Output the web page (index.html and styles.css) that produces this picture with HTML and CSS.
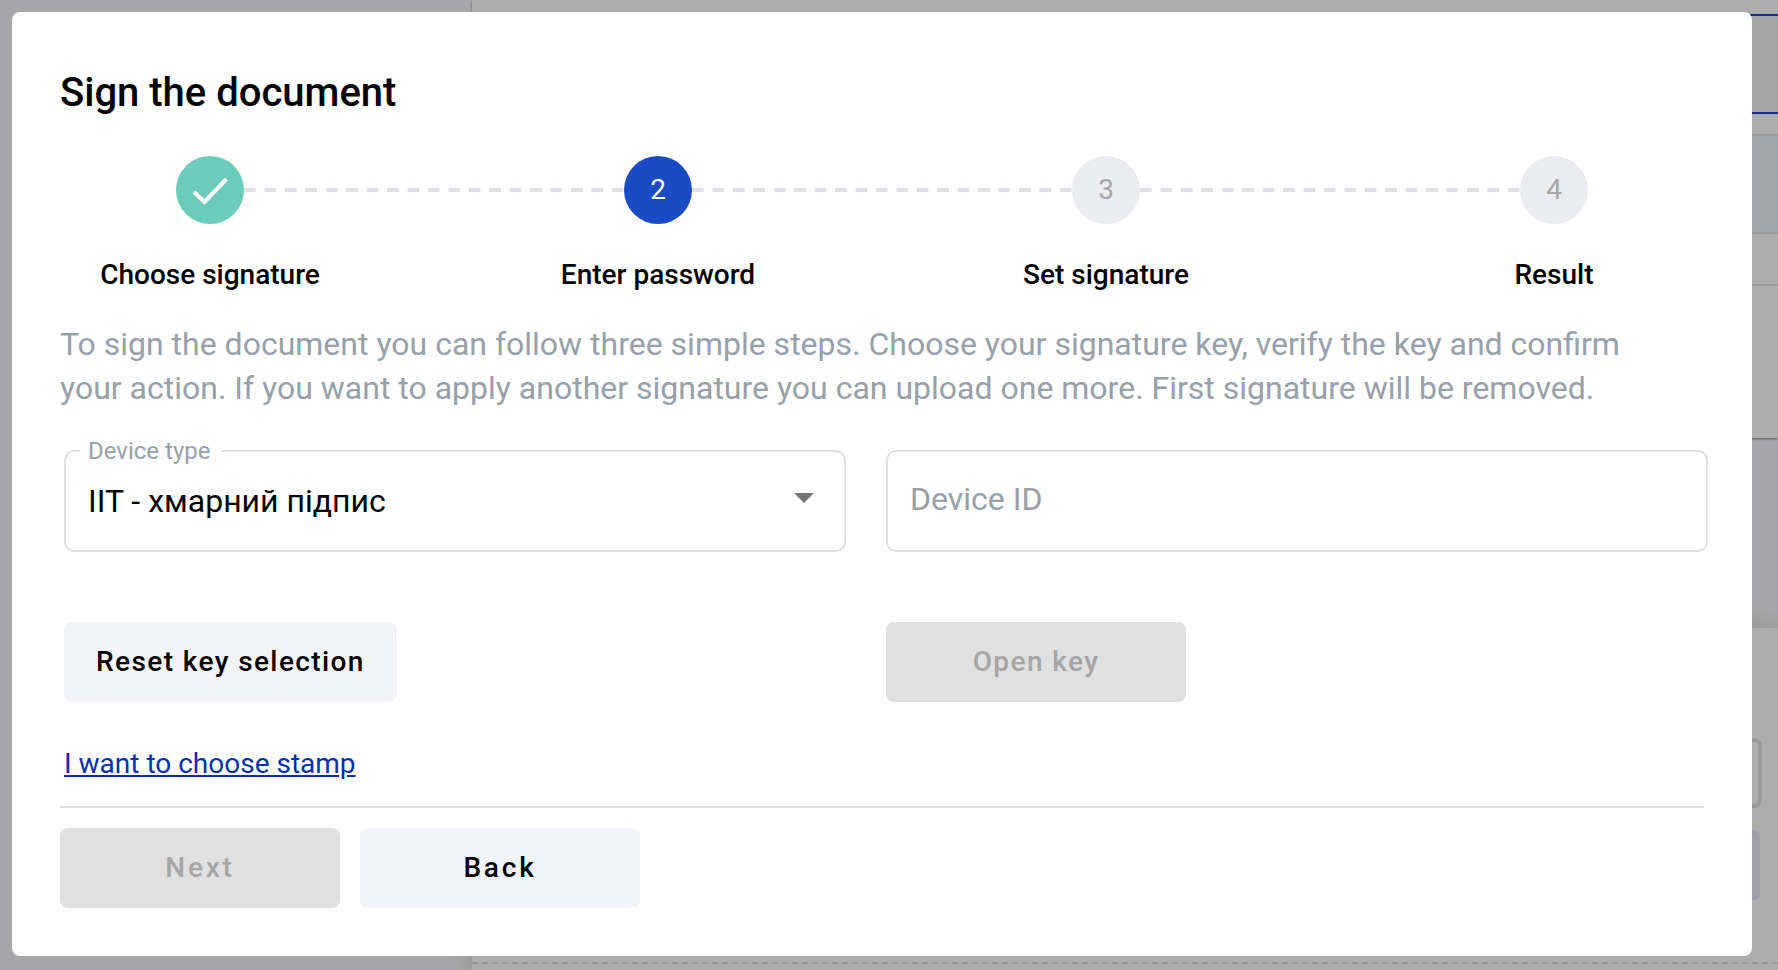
FILE: index.html
```html
<!DOCTYPE html>
<html lang="en">
<head>
<meta charset="utf-8">
<meta name="viewport" content="width=device-width, initial-scale=1">
<title>Sign the document</title>
<link rel="stylesheet" href="styles.css">
</head>
<body>
<div class="page" aria-hidden="true">
  <div class="page-side"></div>
  <div class="page-main">
    <div class="sheet">
      <div class="sheet-active"></div>
      <div class="sheet-head"></div>
      <div class="sheet-row"></div>
    </div>
    <div class="panel">
      <div class="panel-field"></div>
      <div class="panel-action"></div>
      <div class="panel-drop"></div>
    </div>
  </div>
</div>

<div class="overlay">
  <section class="modal" role="dialog" aria-modal="true" aria-labelledby="modal-title">
    <h1 class="title" id="modal-title">Sign the document</h1>

    <ol class="stepper">
      <li class="step">
        <span class="dot dot-done">
          <svg class="check" viewBox="0 0 36 28" aria-label="Done"><path d="M2 16 12.500 26 34.500 3" fill="none" stroke="currentColor" stroke-width="4"/></svg>
        </span>
        <span class="line"></span>
        <span class="step-label">Choose signature</span>
      </li>
      <li class="step" aria-current="step">
        <span class="dot dot-current">2</span>
        <span class="line"></span>
        <span class="step-label">Enter password</span>
      </li>
      <li class="step">
        <span class="dot">3</span>
        <span class="line"></span>
        <span class="step-label">Set signature</span>
      </li>
      <li class="step step-last">
        <span class="dot">4</span>
        <span class="step-label">Result</span>
      </li>
    </ol>

    <p class="intro">To sign the document you can follow three simple steps. Choose your signature key, verify the key and confirm your action. If you want to apply another signature you can upload one more. First signature will be removed.</p>

    <form class="key-form">
      <div class="fields">
        <div class="field field-select">
          <label class="field-label" for="device-type">Device type</label>
          <select class="control" id="device-type">
            <option>IIT - хмарний підпис</option>
          </select>
          <svg class="arrow" viewBox="0 0 20 10" aria-hidden="true"><path d="M0 0h20L10 10z" fill="currentColor"/></svg>
        </div>
        <div class="field">
          <input class="control control-text" id="device-id" type="text" placeholder="Device ID" aria-label="Device ID">
        </div>
      </div>
      <div class="key-actions">
        <button class="button" type="button">Reset key selection</button>
        <button class="button button-open" type="button" disabled>Open key</button>
      </div>
      <a class="stamp-link" href="#stamp">I want to choose stamp</a>
    </form>

    <div class="footer">
      <button class="button button-nav" type="button" disabled>Next</button>
      <button class="button button-nav" type="button">Back</button>
    </div>
  </section>
</div>
</body>
</html>
```
FILE: styles.css
```css
* {
  box-sizing: border-box;
}

body {
  margin: 0;
  font-family: Roboto, "Noto Sans", sans-serif;
  color: #000;
  background: #a7a7a9;
}

/* Dimmed page behind the dialog */
.page {
  position: fixed;
  inset: 0;
  display: flex;
  overflow: hidden;
}

.page-side {
  flex: 0 0 472px;
}

.page-main {
  flex: 1;
  display: flex;
  flex-direction: column;
  gap: 190px;
}

.sheet {
  height: 438px;
  padding-top: 14px;
  background: #adadad;
  box-shadow: 0 1px 2px #555;
}

.sheet-active {
  height: 100px;
  margin-bottom: 20px;
  background: #a5a5a5;
  border: solid #163186;
  border-width: 2px 0;
}

.sheet-head {
  height: 100px;
  background: #a6a7a9;
  border: solid #99999b;
  border-width: 2px 0;
}

.sheet-row {
  height: 52px;
  border-bottom: 2px solid #99999b;
}

.panel {
  flex: 1;
  padding-top: 110px;
  background: #adadad;
  box-shadow: 0 0 24px #8c8c8c;
}

.panel-field {
  height: 70px;
  margin: 0 16px 22px 40px;
  border: 4px solid #999a9c;
  border-radius: 8px;
}

.panel-action {
  height: 70px;
  margin: 0 18px 62px 40px;
  border-radius: 6px;
  background: #a09ea9;
}

.panel-drop {
  border-top: 2px dashed #999;
}

/* Dialog */
.overlay {
  position: relative;
  padding: 12px 26px 14px 12px;
}

.modal {
  padding: 48px;
  border-radius: 8px;
  background: #fff;
}

.title {
  margin: 0 0 30px;
  font-size: 40px;
  line-height: 66px;
  font-weight: 500;
}

.stepper {
  display: flex;
  margin: 0 0 30px;
  padding: 0;
  list-style: none;
}

.step {
  flex: 1;
  display: grid;
  grid-template-columns: 116px 68px 116px 1fr;
  row-gap: 34px;
  align-items: center;
}

.step-last {
  flex: 0 0 300px;
}

.dot {
  grid-column: 2;
  display: flex;
  align-items: center;
  justify-content: center;
  height: 68px;
  border-radius: 50%;
  font-size: 28px;
  line-height: 32px;
  color: #a6a6a6;
  background: #ebecf0;
}

.dot-done {
  color: #fff;
  background: #6bccb9;
}

.dot-current {
  color: #fff;
  background: #1a4bc4;
}

.check {
  width: 36px;
  height: 28px;
}

/* Runs on to the next step's dot: 19 dashes, the last one touching it */
.line {
  grid-column: 3 / 5;
  height: 4px;
  margin-right: -116px;
  background: linear-gradient(to right, #e0e1e5 12px, transparent 12px) 0 0 / calc((100% - 12px) / 18) 100% repeat-x;
}

.step-label {
  grid-column: 1 / 4;
  font-size: 28px;
  line-height: 34px;
  font-weight: 500;
  text-align: center;
}

.intro {
  margin: 0 0 40px;
  padding-right: 60px;
  font-size: 32px;
  line-height: 44px;
  color: #98a0a9;
}

.key-form {
  margin: 0 -4px 26px 4px;
}

.fields,
.key-actions {
  display: grid;
  grid-template-columns: 1fr 1fr;
}

.fields {
  margin-bottom: 70px;
}

.key-actions {
  justify-items: start;
  margin-bottom: 46px;
}

.field {
  position: relative;
}

.field-select {
  margin-right: 40px;
}

.field-label {
  position: absolute;
  top: -14px;
  left: 16px;
  padding: 0 12px 0 8px;
  font-size: 24px;
  line-height: 30px;
  color: #98a0a9;
  background: #fff;
}

.control {
  display: block;
  width: 100%;
  height: 102px;
  margin: 0;
  padding: 0 22px;
  appearance: none;
  border: 2px solid #e0e0e0;
  border-radius: 10px;
  font-family: inherit;
  font-size: 32px;
  color: #000;
  background: #fff;
}

.control-text {
  padding-bottom: 4px;
}

.control::placeholder {
  color: #98a0a9;
  opacity: 1;
}

.arrow {
  position: absolute;
  top: 43px;
  right: 32px;
  width: 20px;
  height: 10px;
  color: #757575;
  pointer-events: none;
}

.button {
  height: 80px;
  padding: 0 32px;
  border: 0;
  border-radius: 8px;
  font-family: inherit;
  font-size: 28px;
  line-height: 32px;
  font-weight: 500;
  letter-spacing: 0.05em;
  color: #000;
  background: #f3f4f7;
}

.button:disabled {
  color: #a6a6a6;
  background: #e0e0e0;
}

.button-open {
  width: 300px;
}

.button-nav {
  width: 280px;
  letter-spacing: 0.1em;
}

.stamp-link {
  display: block;
  width: fit-content;
  font-size: 28px;
  line-height: 32px;
  color: #0530ad;
}

.footer {
  display: flex;
  gap: 20px;
  padding-top: 20px;
  border-top: 2px solid #e0e0e0;
}
```
